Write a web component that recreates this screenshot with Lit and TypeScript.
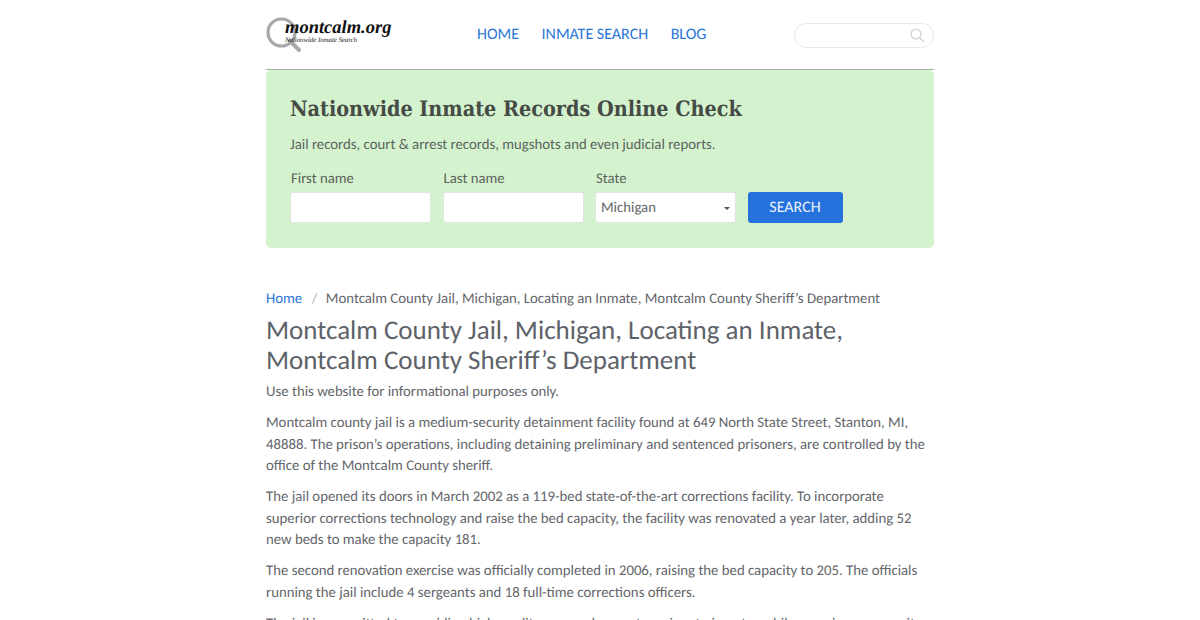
import { LitElement, html, css } from "lit";
import { customElement } from "lit/decorators.js";

@customElement("app-root")
export class AppRoot extends LitElement {
  static styles = css`
    :host { display: block; height: 620px; overflow: hidden; background: #fff; font-family: Carlito, Lato, sans-serif; color: #63666b; font-size: 14.78px; line-height: 21.5px; text-rendering: geometricPrecision; }
    .wrap { width: 668px; margin: 0 auto; }
    header { height: 69px; display: flex; align-items: flex-start; border-bottom: 1px solid #a9aca9; box-sizing: content-box; }
    .logo { position: relative; width: 140px; height: 60px; flex: none; }
    .logo svg { position: absolute; left: 0; top: 17px; }
    .logo .name { position: absolute; left: 19px; top: 17px; font: italic bold 18.5px/22px "Liberation Serif", serif; color: #111; letter-spacing: 0; white-space: nowrap; }
    .logo .tag { position: absolute; left: 19px; top: 36px; font: italic 7px/9px "Liberation Serif", serif; color: #222; white-space: nowrap; letter-spacing: -0.1px; }
    nav { display: flex; gap: 22.5px; margin-left: 71px; padding-top: 25px; }
    nav a { color: #2a75d6; font-size: 16px; line-height: 20px; text-decoration: none; white-space: nowrap; }
    .search { margin-left: auto; margin-top: 23px; height: 23px; border: 1px solid #e9e9e9; border-radius: 12px; display: flex; align-items: center; justify-content: flex-end; padding-right: 8px; box-sizing: content-box; width: 130px; }
    .hero { background: #d5f2cf; border-radius: 5px; height: 178px; padding: 25px 24px 0; box-sizing: border-box; }
    h2 { margin: 0; font: bold 21.4px/30px "DejaVu Serif Condensed", "DejaVu Serif", serif; color: #454b45; letter-spacing: 0; white-space: nowrap; }
    .hero p { margin: 8px 0 0; color: #5a645c; line-height: 22px; }
    form { display: flex; align-items: flex-end; gap: 11.5px; margin-top: 12px; }
    .field { display: flex; flex-direction: column; width: 141px; }
    label { line-height: 22px; color: #5a645c; margin-bottom: 3px; padding-left: 1px; }
    .input { height: 31px; background: #fff; border: 1px solid #dfe6dd; border-radius: 3px; box-sizing: border-box; width: 141px; }
    .select { display: flex; align-items: center; justify-content: space-between; padding: 0 5px; color: #63666b; }
    .arrow { width: 0; height: 0; border-left: 3px solid transparent; border-right: 3px solid transparent; border-top: 3.5px solid #555; margin-top: 2px; }
    .btn { width: 95px; height: 31px; background: #2672dc; color: #e8f1fc; border-radius: 3px; display: flex; align-items: center; justify-content: center; font-size: 16px; }
    .crumbs { margin-top: 38.5px; display: flex; line-height: 22px; color: #63666b; white-space: nowrap; }
    .crumbs a { color: #2a75d6; text-decoration: none; }
    .crumbs span.sep { color: #b0b3b6; margin: 0 8.5px 0 9.5px; }
    h1 { margin: 7px 0 0; font-weight: 400; font-size: 27px; letter-spacing: 0; line-height: 30px; color: #5e6269; }
    .body p { margin: 0 0 9.5px; line-height: 21.5px; }
    .body { margin-top: 5.5px; }
  `;
  render() {
    return html`<div class="wrap">
      <header>
        <div class="logo">
          <svg width="36" height="36" viewBox="0 0 36 36" fill="none" stroke="#a8a8a8" stroke-width="3.2">
            <circle cx="15.5" cy="15.5" r="13.5"></circle>
            <path d="M24 24 L33 33" stroke-width="4" stroke-linecap="round"></path>
          </svg>
          <div class="name">montcalm.org</div>
          <div class="tag">Nationwide Inmate Search</div>
        </div>
        <nav><a>HOME</a><a>INMATE SEARCH</a><a>BLOG</a></nav>
        <div class="search">
          <svg width="15" height="15" viewBox="0 0 15 15" fill="none" stroke="#cfcfcf" stroke-width="1.2">
            <circle cx="6" cy="6" r="5"></circle>
            <path d="M9.6 9.6 L14 14"></path>
          </svg>
        </div>
      </header>
      <section class="hero">
        <h2>Nationwide Inmate Records Online Check</h2>
        <p>Jail records, court &amp; arrest records, mugshots and even judicial reports.</p>
        <form>
          <div class="field"><label>First name</label><div class="input"></div></div>
          <div class="field"><label>Last name</label><div class="input"></div></div>
          <div class="field"><label>State</label><div class="input select">Michigan<span class="arrow"></span></div></div>
          <div class="btn">SEARCH</div>
        </form>
      </section>
      <div class="crumbs"><a>Home</a><span class="sep">/</span><span>Montcalm County Jail, Michigan, Locating an Inmate, Montcalm County Sheriff’s Department</span></div>
      <h1>Montcalm County Jail, Michigan, Locating an Inmate, Montcalm County Sheriff’s Department</h1>
      <div class="body">
        <p>Use this website for informational purposes only.</p>
        <p>Montcalm county jail is a medium-security detainment facility found at 649 North State Street, Stanton, MI, 48888. The prison’s operations, including detaining preliminary and sentenced prisoners, are controlled by the office of the Montcalm County sheriff.</p>
        <p>The jail opened its doors in March 2002 as a 119-bed state-of-the-art corrections facility. To incorporate superior corrections technology and raise the bed capacity, the facility was renovated a year later, adding 52 new beds to make the capacity 181.</p>
        <p>The second renovation exercise was officially completed in 2006, raising the bed capacity to 205. The officials running the jail include 4 sergeants and 18 full-time corrections officers.</p>
        <p>The jail is committed to providing high-quality care and correct services to inmates while ensuring community safety and security at all times throughout the facility.</p>
      </div>
    </div>`;
  }
}
